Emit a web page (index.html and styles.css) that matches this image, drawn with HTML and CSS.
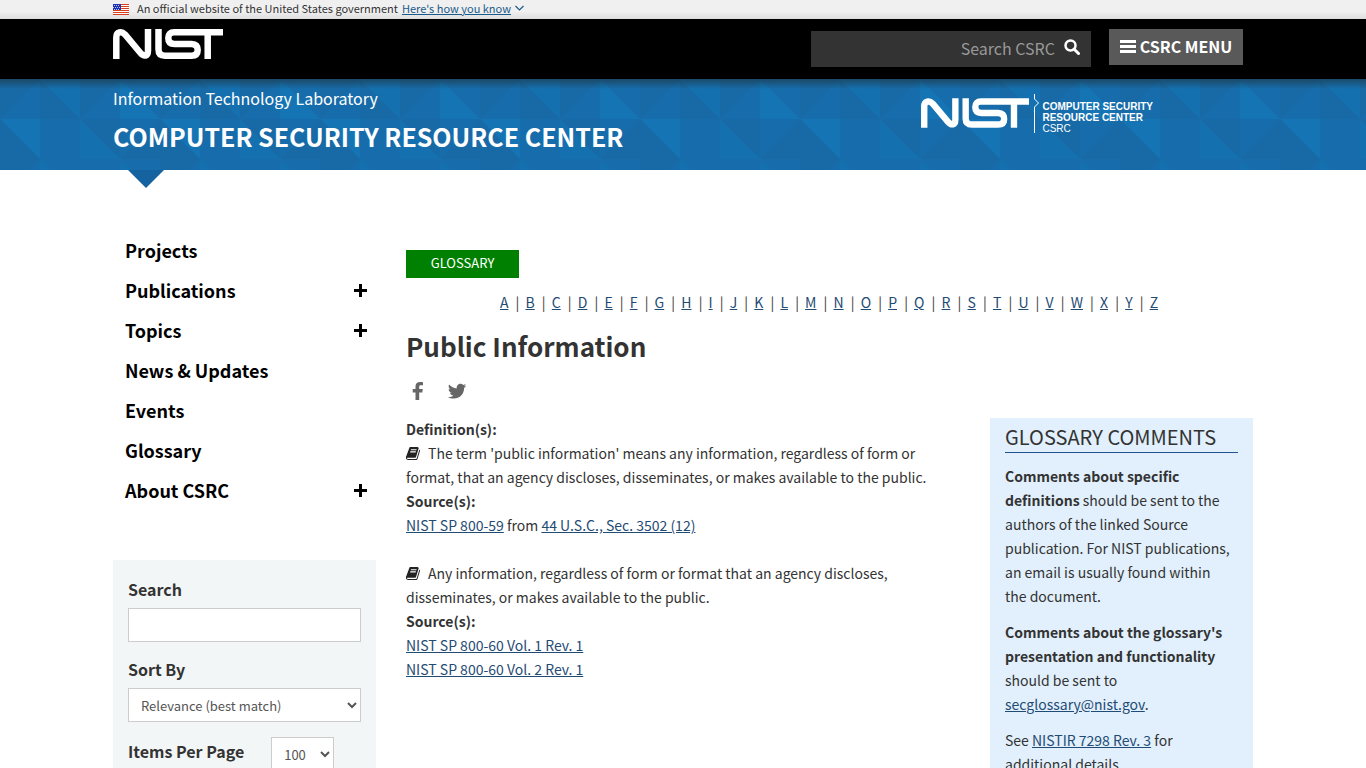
FILE: index.html
```
<!DOCTYPE html>
<html lang="en">
<head>
<meta charset="UTF-8">
<meta name="viewport" content="width=device-width, initial-scale=1.0">
<title>Public Information - Glossary | CSRC</title>
<link rel="stylesheet" href="styles.css">
</head>
<body>
<!-- Shared icons -->
<svg class="sprite" aria-hidden="true">
  <symbol id="nist" viewBox="0 0 110 30">
    <g fill="none" stroke="#fff" stroke-width="6.500">
      <path d="M3.300 30V8.500C3.300 2.500 8.500 2 12 5.500L27.500 24C31 28 35 27.500 35 21.500V0"/>
      <path d="M45.500 0V20.500Q45.500 26.700 52 26.700H78.500Q84.700 26.700 84.700 21T78.500 15H61.500Q55.300 15 55.300 9T61.500 3.300H110"/>
      <path d="M94.700 3V30"/>
    </g>
  </symbol>
  <symbol id="book" viewBox="64 128 1664 1536">
    <path fill="#222" d="M1639 478q40 57 18 129l-275 906q-19 64-76.500 107.500t-122.500 43.500h-923q-77 0-148.500-53.500t-99.500-131.500q-24-67-2-127 0-4 3-27t4-37q1-8-3-21.500t-3-19.500q2-11 8-21t16.500-23.500 16.500-23.500q23-38 45-91.500t30-91.500q3-10 .5-30t-.5-28q3-11 17-28t17-23q21-36 42-92t25-90q1-9-2.500-32t.5-28q4-13 22-30.500t22-22.500q19-26 42.500-84.500t27.500-96.500q1-8-3-25.500t-2-26.500q2-8 9-18t18-23 17-21q8-12 16.500-30.500t15-35 16-36 19.500-32 26.500-23.500 36-11.500 47.500 5.500l-1 3q38-9 51-9h761q74 0 114 56t18 130l-274 906q-36 119-71.500 153.500t-128.500 34.500h-869q-27 0-38 15-11 16-1 43 24 70 144 70h923q29 0 56-15.500t35-41.500l300-987q7-22 5-57 38 15 59 43zm-1064 2q-4 13 2 22.500t20 9.500h608q13 0 25.500-9.500t16.500-22.500l21-64q4-13-2-22.500t-20-9.500h-608q-13 0-25.500 9.500t-16.500 22.500zm-83 256q-4 13 2 22.500t20 9.500h608q13 0 25.500-9.500t16.500-22.500l21-64q4-13-2-22.500t-20-9.500h-608q-13 0-25.500 9.500t-16.500 22.500z"/>
  </symbol>
  <symbol id="plus" viewBox="0 0 13 13">
    <path d="M5 0h3v5h5v3H8v5H5V8H0V5h5z"/>
  </symbol>
</svg>

<div class="gov-banner">
  <div class="container">
    <svg class="flag" viewBox="0 0 16 11" aria-hidden="true">
      <path fill="#fff" d="M0 0h16v11H0z"/>
      <path stroke="#db3e1f" d="M0 .5h16M0 2.500h16M0 4.500h16M0 6.500h16M0 8.500h16M0 10.500h16"/>
      <path fill="#1e33b1" d="M0 0h8v6H0z"/>
      <path stroke="#fff" stroke-dasharray="1 1" d="M1 1.500h6M0 3.500h7M1 5.500h6" stroke-width=".7"/>
    </svg>
    <span>An official website of the United States government</span>
    <a href="#">Here's how you know</a>
    <svg class="chevron" viewBox="0 0 9 6" aria-hidden="true"><path d="M.5 1l4 4 4-4" fill="none" stroke="#1a5a8a" stroke-width="1.200"/></svg>
  </div>
</div>

<header class="top-bar">
  <div class="container">
    <a class="nist-logo" href="#" aria-label="NIST home"><svg><use href="#nist"/></svg></a>
    <form class="site-search">
      <input type="text" placeholder="Search CSRC" aria-label="Search CSRC">
      <button type="button" aria-label="Search">
        <svg viewBox="0 0 16 16"><circle cx="6.500" cy="6.500" r="5" fill="none" stroke="#fff" stroke-width="2.500"/><path d="M10 10l4.500 4.500" stroke="#fff" stroke-width="3" stroke-linecap="round"/></svg>
      </button>
    </form>
    <button type="button" class="menu-btn">
      <svg viewBox="0 0 16 13" aria-hidden="true"><path d="M0 1.500h16M0 6.500h16M0 11.500h16" stroke="#fff" stroke-width="3"/></svg>
      CSRC MENU
    </button>
  </div>
</header>

<div class="title-bar">
  <svg class="pattern" aria-hidden="true">
    <defs>
      <pattern id="triangles" width="160" height="120" patternUnits="userSpaceOnUse">
        <path fill="#176dab" d="M0 0h160v120H0z"/>
        <path fill="#1474b4" d="M120 0l40 40h-40zM0 40h40v40z"/>
        <path fill="#1570b0" d="M40 0h40v40zM80 40l40 40H80zM40 80l40 40H40zM120 80l40 40h-40z"/>
        <path fill="#176aa6" d="M0 0h40L0 40zM40 0l40 40H40zM80 0h40L80 40zM0 40l40 40H0zM80 40h40v40zM160 40v40h-40zM0 80h40L0 120z"/>
      </pattern>
    </defs>
    <rect width="100%" height="100%" fill="url(#triangles)"/>
  </svg>
  <div class="container">
    <div class="site-title">
      <a class="lab" href="#">Information Technology Laboratory</a>
      <a class="csrc" href="#">COMPUTER SECURITY RESOURCE CENTER</a>
    </div>
    <a class="csrc-logo" href="#">
      <svg class="mark"><use href="#nist"/></svg>
      <svg class="divider" viewBox="0 0 6 39" aria-hidden="true"><path d="M1.500 0v5l4 4-4 4v26" fill="none" stroke="#fff"/></svg>
      <span><b>COMPUTER SECURITY<br>RESOURCE CENTER</b><br>CSRC</span>
    </a>
  </div>
</div>

<div class="container page">
  <aside class="sidebar">
    <nav>
      <ul>
        <li><a href="#">Projects</a></li>
        <li><a href="#">Publications</a><button type="button" aria-label="Expand Publications"><svg><use href="#plus"/></svg></button></li>
        <li><a href="#">Topics</a><button type="button" aria-label="Expand Topics"><svg><use href="#plus"/></svg></button></li>
        <li><a href="#">News &amp; Updates</a></li>
        <li><a href="#">Events</a></li>
        <li><a href="#">Glossary</a></li>
        <li><a href="#">About CSRC</a><button type="button" aria-label="Expand About CSRC"><svg><use href="#plus"/></svg></button></li>
      </ul>
    </nav>
    <form class="filters">
      <label for="keywords">Search</label>
      <input type="text" id="keywords">
      <label for="sort">Sort By</label>
      <select id="sort"><option>Relevance (best match)</option></select>
      <div class="per-page">
        <label for="count">Items Per Page</label>
        <select id="count"><option>100</option></select>
      </div>
    </form>
  </aside>

  <main>
    <div class="badge">GLOSSARY</div>
    <div class="letters">
      <a href="#">A</a> | <a href="#">B</a> | <a href="#">C</a> | <a href="#">D</a> | <a href="#">E</a> | <a href="#">F</a> | <a href="#">G</a> | <a href="#">H</a> | <a href="#">I</a> | <a href="#">J</a> | <a href="#">K</a> | <a href="#">L</a> | <a href="#">M</a> | <a href="#">N</a> | <a href="#">O</a> | <a href="#">P</a> | <a href="#">Q</a> | <a href="#">R</a> | <a href="#">S</a> | <a href="#">T</a> | <a href="#">U</a> | <a href="#">V</a> | <a href="#">W</a> | <a href="#">X</a> | <a href="#">Y</a> | <a href="#">Z</a>
    </div>
    <h1>Public Information</h1>
    <div class="share">
      <a href="#" aria-label="Share to Facebook"><svg viewBox="0 0 24 24"><path d="M17 3.200v3h-2.200c-1.300 0-1.600.7-1.600 1.600v2.100h3.600l-.5 3.600h-3.100V21H9.500v-7.500H6.700V9.900h2.800V7.300C9.500 4.500 11.400 3 14.200 3c1.300 0 2.300.1 2.800.2z"/></svg></a>
      <a href="#" aria-label="Share to Twitter"><svg viewBox="0 0 24 24"><path d="M21 7c-.6.900-1.200 1.400-1.900 1.900.2 4.600-3.300 10.600-10.300 10.600-2.200 0-4.200-.6-5.800-1.600 2 .2 3.900-.3 5.400-1.500-1.700 0-3.100-1.200-3.500-2.700.6.100 1.200.1 1.700-.1-1.700-.3-3-1.900-3-3.700.5.300 1.100.5 1.700.5C3.600 9.200 3.200 7.200 4.100 5.600c1.900 2.300 4.600 3.800 7.700 3.900-.6-2.400 1.300-4.700 3.700-4.700 1.100 0 2 .4 2.700 1.200.9-.2 1.700-.5 2.400-.9-.3.900-.9 1.600-1.700 2.100.7-.1 1.500-.3 2.100-.6z"/></svg></a>
    </div>
    <div class="columns">
      <section class="definitions">
        <p>
          <b>Definition(s):</b><br>
          <svg class="book"><use href="#book"/></svg>The term 'public information' means any information, regardless of form or format, that an agency discloses, disseminates, or makes available to the public.<br>
          <b>Source(s):</b><br>
          <a href="#">NIST SP 800-59</a> from <a href="#">44 U.S.C., Sec. 3502 (12)</a>
        </p>
        <p>
          <svg class="book"><use href="#book"/></svg>Any information, regardless of form or format that an agency discloses, disseminates, or makes available to the public.<br>
          <b>Source(s):</b><br>
          <a href="#">NIST SP 800-60 Vol. 1 Rev. 1</a><br>
          <a href="#">NIST SP 800-60 Vol. 2 Rev. 1</a>
        </p>
      </section>
      <section class="comments">
        <h2>GLOSSARY COMMENTS</h2>
        <p><b>Comments about specific definitions</b> should be sent to the authors of the linked Source publication. For NIST publications, an email is usually found within the document.</p>
        <p><b>Comments about the glossary's presentation and functionality</b> should be sent to <a href="#">secglossary@nist.gov</a>.</p>
        <p>See <a href="#">NISTIR 7298 Rev. 3</a> for additional details.</p>
      </section>
    </div>
  </main>
</div>
</body>
</html>
```
FILE: styles.css
```
* {
  box-sizing: border-box;
}

html {
  overflow: hidden;
}

body {
  margin: 0;
  font-family: "Noto Sans CJK SC", "Noto Sans", sans-serif;
  font-size: 14px;
  line-height: 24px;
  color: #333;
  background: #fff;
}

a {
  color: #1f4b74;
}

input, select, button {
  font-family: inherit;
  border-radius: 0;
}

.sprite {
  display: none;
}

.container {
  max-width: 1170px;
  margin: 0 auto;
  padding: 0 15px;
}

/* Government banner */
.gov-banner {
  height: 19px;
  background: linear-gradient(#f0f0f0 60%, #ddd);
  font-size: 11px;
  line-height: 16px;
}

.gov-banner .container {
  display: flex;
  align-items: center;
}

.gov-banner a {
  color: #1a5a8a;
  margin: 0 4px;
}

.flag {
  width: 16px;
  height: 11px;
  margin: 2px 8px 0 0;
}

.chevron {
  width: 9px;
  height: 6px;
}

/* Black bar */
.top-bar {
  background: #000;
  height: 60px;
}

.top-bar .container {
  display: flex;
  align-items: flex-start;
  padding-top: 10px;
}

.nist-logo {
  margin-right: auto;
}

.nist-logo svg {
  display: block;
  width: 110px;
  height: 30px;
}

.site-search {
  display: flex;
  width: 280px;
  height: 36px;
  margin: 2px 18px 0 0;
  background: #333;
}

.site-search input {
  flex: 1;
  min-width: 0;
  padding: 0 0 2px;
  border: 0;
  background: none;
  color: #fff;
  font-size: 16px;
  text-align: right;
}

.site-search input::placeholder {
  color: #999;
}

.site-search button {
  width: 36px;
  padding: 0 2px 4px 0;
  border: 0;
  background: none;
}

.site-search svg {
  display: block;
  width: 16px;
  height: 16px;
  margin: 0 auto;
}

.menu-btn {
  display: flex;
  align-items: center;
  justify-content: center;
  gap: 4px;
  width: 134px;
  height: 36px;
  margin-right: 10px;
  padding: 0 0 2px;
  border: 0;
  background: #595959;
  color: #fff;
  font-size: 16px;
  font-weight: bold;
}

.menu-btn svg {
  width: 16px;
  height: 13px;
}

/* Blue title bar */
.title-bar {
  position: relative;
  height: 91px;
  background: #176eac;
}

.title-bar::before {
  content: "";
  position: absolute;
  top: 0;
  left: 0;
  right: 0;
  height: 10px;
  background: linear-gradient(rgba(30, 50, 60, .6), rgba(30, 50, 60, 0));
  z-index: 1;
}

.pattern {
  position: absolute;
  width: 100%;
  height: 100%;
}

.title-bar .container {
  position: relative;
  display: flex;
  justify-content: space-between;
}

.title-bar .container::after {
  content: "";
  position: absolute;
  top: 91px;
  left: 30px;
  border: 18px solid transparent;
  border-top-color: #1562a0;
  border-bottom: 0;
}

.site-title {
  display: flex;
  flex-direction: column;
  padding-top: 7px;
}

.site-title a {
  color: #fff;
  text-decoration: none;
}

.lab {
  font-size: 16px;
}

.csrc {
  margin-top: 8px;
  font-size: 25px;
  line-height: 36px;
  font-weight: bold;
}

.csrc-logo {
  display: flex;
  margin: 15px 100px 0 0;
  color: #fff;
  text-decoration: none;
  font-family: "Liberation Sans", Arial, sans-serif;
  font-size: 10px;
  line-height: 11px;
}

.csrc-logo .mark {
  width: 108px;
  height: 30px;
  margin-top: 4px;
}

.csrc-logo .divider {
  width: 6px;
  height: 39px;
  margin: 0 3px 0 4px;
}

.csrc-logo span {
  padding-top: 7px;
}

/* Page columns */
.page {
  display: grid;
  grid-template-columns: 263px 1fr;
  gap: 30px;
}

.sidebar nav {
  padding-top: 60px;
}

.sidebar ul {
  margin: 0;
  padding: 0;
  list-style: none;
}

.sidebar li {
  display: flex;
  align-items: center;
  justify-content: space-between;
  height: 40px;
  padding: 0 9px 0 12px;
}

.sidebar li a {
  color: #000;
  font-size: 18px;
  font-weight: bold;
  text-decoration: none;
}

.sidebar li button {
  padding: 0;
  border: 0;
  background: none;
}

.sidebar li svg {
  display: block;
  width: 13px;
  height: 13px;
}

.filters {
  margin-top: 50px;
  padding: 17px 15px;
  background: #f3f6f6;
}

.filters label {
  display: block;
  height: 31px;
  font-size: 16px;
  font-weight: bold;
}

.filters input,
.filters select {
  display: block;
  width: 100%;
  height: 34px;
  margin-bottom: 15px;
  padding: 0 8px;
  border: 1px solid #ccc;
  background: #fff;
  color: #555;
  font-size: 13px;
}

.per-page {
  display: flex;
  gap: 27px;
}

.per-page label {
  padding-top: 2px;
}

.filters .per-page select {
  width: 63px;
}

/* Main content */
main {
  padding-top: 80px;
}

.badge {
  width: 113px;
  height: 28px;
  background: green;
  color: #fff;
  font-size: 13px;
  line-height: 26px;
  text-align: center;
}

.letters {
  margin-top: 12px;
  text-align: center;
}

.letters a {
  margin: 0 4px 0 3px;
}

h1 {
  margin: 14px 0 0;
  font-size: 26px;
  line-height: 36px;
}

.share {
  display: flex;
  gap: 15px;
  margin-top: 15px;
}

.share a {
  height: 24px;
}

.share svg {
  display: block;
  width: 24px;
  height: 24px;
  fill: #666;
}

.columns {
  display: grid;
  grid-template-columns: 1fr 263px;
  gap: 30px;
  margin-top: 14px;
}

.definitions p {
  margin: 0 0 24px;
}

.book {
  width: 15px;
  height: 13px;
  margin-right: 7px;
  vertical-align: -1px;
}

.comments {
  margin-top: 1px;
  padding: 6px 15px;
  background: #e1f0fc;
}

.comments h2 {
  margin: 0 0 11px;
  padding-bottom: 2px;
  border-bottom: 1px solid #205493;
  font-size: 20px;
  font-weight: normal;
  line-height: 26px;
}

.comments p {
  margin: 0 0 12px;
  padding-right: 6px;
}
```
